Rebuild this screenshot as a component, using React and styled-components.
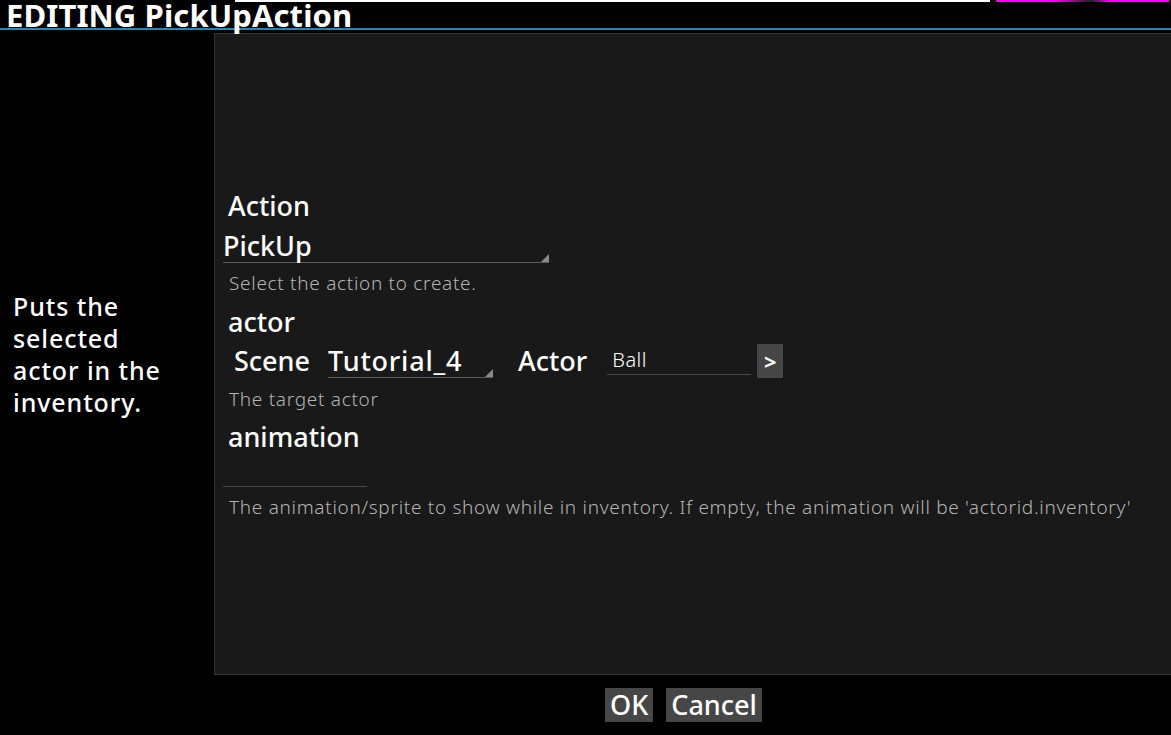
import React from "react";
import styled, { createGlobalStyle } from "styled-components";

const GlobalStyle = createGlobalStyle`
  html, body {
    margin: 0;
    padding: 0;
    background: #000;
  }
  body {
    font-family: "Noto Sans", "DejaVu Sans", sans-serif;
    color: #fff;
  }
`;

const Screen = styled.div`
  width: 1171px;
  height: 735px;
  display: flex;
  flex-direction: column;
  background: #000;
  overflow: hidden;
`;

const Header = styled.div`
  position: relative;
  height: 33px;
  flex: none;
`;

// leftover strip of the previous frame along the top edge
const TopStrip = styled.div`
  position: absolute;
  top: 0;
  left: 0;
  right: 0;
  height: 2px;
  display: flex;
`;

const StripPart = styled.div`
  margin-left: ${(p) => p.$offset}px;
  width: ${(p) => p.$width}px;
  background: ${(p) => p.$color};
`;

const Title = styled.h1`
  margin: 0;
  padding: 1px 0 0 6px;
  height: 27px;
  font-size: 31px;
  line-height: 28px;
  font-weight: 700;
  letter-spacing: 0.1px;
  white-space: nowrap;
`;

const TitleRule = styled.div`
  height: 2px;
  background: #2a89a9;
`;

const Body = styled.div`
  flex: 1;
  display: flex;
  min-height: 0;
`;

const Description = styled.div`
  width: 214px;
  flex: none;
  display: flex;
  align-items: center;
  padding: 0 36px 0 13px;
  box-sizing: border-box;
  font-size: 25px;
  line-height: 32px;
  font-weight: 500;
  letter-spacing: 0.9px;
`;

const Panel = styled.div`
  flex: 1;
  display: flex;
  flex-direction: column;
  justify-content: center;
  padding: 0 0 0 8px;
  background: #191919;
  border-top: 1px solid #333;
  border-left: 1px solid #333;
  border-bottom: 1px solid #3a3a3a;
`;

const Label = styled.div`
  padding-left: 5px;
  height: 32px;
  font-size: 27px;
  line-height: 32px;
  font-weight: 500;
`;

const Help = styled.div`
  padding-left: 6px;
  margin: ${(p) => p.$top}px 0 ${(p) => p.$bottom}px;
  font-size: 19px;
  line-height: 24px;
  font-weight: 300;
  letter-spacing: 0.7px;
  color: #b4b4b4;
`;

const Select = styled.div`
  position: relative;
  width: ${(p) => p.$width}px;
  box-sizing: border-box;
  height: ${(p) => p.$height}px;
  display: flex;
  align-items: flex-end;
  font-size: 27px;
  line-height: 32px;
  font-weight: 500;
  letter-spacing: ${(p) => p.$spacing || 0}px;
  border-bottom: 1px solid #5a5a5a;
  &::after {
    content: "";
    position: absolute;
    right: 0;
    bottom: 0;
    border-style: solid;
    border-width: 0 0 8px 8px;
    border-color: transparent transparent #8a8a8a transparent;
  }
`;

const TextField = styled.div`
  width: 144px;
  box-sizing: border-box;
  height: ${(p) => p.$height}px;
  padding-left: 5px;
  display: flex;
  align-items: center;
  font-size: 20px;
  line-height: 26px;
  font-weight: 300;
  letter-spacing: 0.5px;
  border-bottom: 1px solid #4a4a4a;
`;

const Row = styled.div`
  display: flex;
  align-items: center;
  height: 34px;
  margin-top: 6px;
  padding-left: 11px;
`;

const RowLabel = styled.span`
  font-size: 27px;
  font-weight: 500;
  margin-right: ${(p) => p.$gap}px;
`;

const RowSelect = styled(Select)`
  margin-right: 25px;
  align-self: stretch;
  height: auto;
  align-items: center;
  padding-top: 2px;
`;

const RowField = styled(TextField)`
  align-self: flex-start;
  margin-top: 3px;
`;

const PickButton = styled.button`
  margin-left: 6px;
  width: 26px;
  height: 34px;
  padding: 0;
  border: none;
  background: #464646;
  color: #fff;
  font-family: inherit;
  font-size: 22px;
  font-weight: 700;
`;

const Footer = styled.div`
  height: 60px;
  flex: none;
  display: flex;
  align-items: center;
  gap: 13px;
  padding-left: 605px;
`;

const Button = styled.button`
  height: 34px;
  padding: 0 5px;
  border: none;
  background: #464646;
  color: #fff;
  font-family: inherit;
  font-size: 27px;
  font-weight: 500;
  line-height: 34px;
`;

export default function App() {
  return (
    <Screen>
      <GlobalStyle />
      <Header>
        <TopStrip>
          <StripPart $offset={235} $width={755} $color="#fff" />
          <StripPart
            $offset={6}
            $width={173}
            $color="linear-gradient(90deg, #f0f 0%, #f0f 33%, #222 55%, #f0f 66%, #f0f 100%)"
          />
        </TopStrip>
        <Title>EDITING PickUpAction</Title>
        <TitleRule />
      </Header>
      <Body>
        <Description>Puts the selected actor in the inventory.</Description>
        <Panel>
          <Label>Action</Label>
          <Select $width={326} $height={41}>PickUp</Select>
          <Help $top={8} $bottom={11}>Select the action to create.</Help>
          <Label>actor</Label>
          <Row>
            <RowLabel $gap={18}>Scene</RowLabel>
            <RowSelect $width={165} $spacing={0.8}>Tutorial_4</RowSelect>
            <RowLabel $gap={20}>Actor</RowLabel>
            <RowField $height={28}>Ball</RowField>
            <PickButton>&gt;</PickButton>
          </Row>
          <Help $top={9} $bottom={10}>The target actor</Help>
          <Label>animation</Label>
          <TextField $height={34} />
          <Help $top={8} $bottom={0}>
            The animation/sprite to show while in inventory. If empty, the
            animation will be 'actorid.inventory'
          </Help>
        </Panel>
      </Body>
      <Footer>
        <Button>OK</Button>
        <Button>Cancel</Button>
      </Footer>
    </Screen>
  );
}
